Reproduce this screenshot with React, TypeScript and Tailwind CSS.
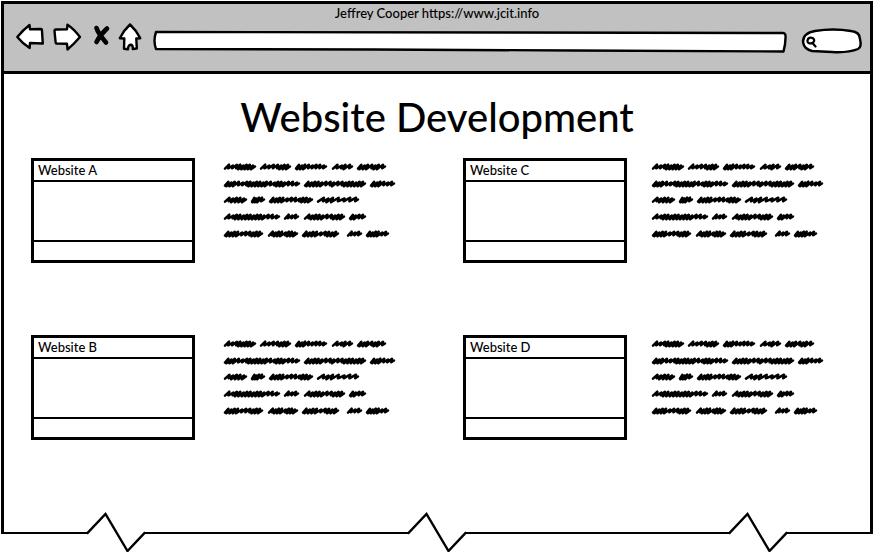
import React from "react";

type Word = [start: number, end: number, strokes: string];

// Scribbled placeholder copy: "n" is an open stroke, "u" a tight one.
const lines: Word[][] = [
  [[1, 33, "nnnuuuuu"], [37, 68, "nnnnuuu"], [72, 104, "uuunnnnn"], [109, 130, "nnun"], [134, 163, "uuunuun"]],
  [[1, 77, "uuunnnuuuuuunnuuunnn"], [81, 143, "uuuuunnunnuuuuuu"], [147, 172, "uuunnn"]],
  [[1, 24, "nuuuu"], [28, 42, "uuun"], [46, 90, "uuuunnnnuuu"], [94, 136, "nuunnnn"]],
  [[1, 57, "nnuuuuuuuuunnn"], [61, 76, "nnn"], [81, 122, "nuuuunnuuu"], [126, 143, "uunn"]],
  [[1, 40, "uuuunnnuuu"], [45, 75, "nuuunuuu"], [79, 116, "uuuunnuuu"], [124, 139, "nnn"], [143, 166, "uuuunn"]],
];
const baselines = [9, 26, 42, 59, 76];

function scribble([start, end, strokes]: Word, y: number) {
  const total = strokes.split("").reduce((sum, s) => sum + (s === "n" ? 5 : 4), 0);
  const scale = (end - start - 4) / total;
  let x = start + 1;
  let d = `M${x} ${y + 1.6}`;
  strokes.split("").forEach((s, i) => {
    const open = s === "n";
    const top = y - 2.3 + (i % 3 === 1 ? 0.8 : 0);
    const low = y + (open ? 1.3 : 2.3);
    x += (open ? 5 : 4) * scale;
    d += ` L${x.toFixed(1)} ${top.toFixed(1)} L${(x - (open ? 0.8 : 2)).toFixed(1)} ${low.toFixed(1)}`;
  });
  return `${d} L${end - 1} ${y - 0.5}`;
}

function PlaceholderText() {
  return (
    <svg className="h-[86px] w-[173px]" viewBox="0 0 173 86" fill="none" stroke="black" strokeWidth="2.5" strokeLinecap="round" strokeLinejoin="round" aria-hidden="true">
      {lines.map((words, i) => words.map((word) => <path key={`${i}-${word[0]}`} d={scribble(word, baselines[i])} />))}
    </svg>
  );
}

function IconButton({ label, width, children }: { label: string; width: number; children: React.ReactNode }) {
  return (
    <button type="button" aria-label={label} className="shrink-0">
      <svg width={width} height="28" viewBox={`0 0 ${width} 28`} className="overflow-visible" fill="white" stroke="black" strokeWidth="2.4" strokeLinecap="round" strokeLinejoin="round">
        {children}
      </svg>
    </button>
  );
}

function Outline({ viewBox, d }: { viewBox: string; d: string }) {
  return (
    <svg className="absolute inset-0 h-full w-full overflow-visible" viewBox={viewBox} preserveAspectRatio="none" fill="white" stroke="black" strokeWidth="2.4" strokeLinejoin="round" aria-hidden="true">
      <path d={d} vectorEffect="non-scaling-stroke" />
    </svg>
  );
}

function Site({ name }: { name: string }) {
  return (
    <article className="contents">
      <div className="w-[164px] border-3 border-black">
        <h2 className="h-[21px] border-b-2 border-black pl-1 text-[13px] leading-[18px]">{name}</h2>
        <div className="h-[58px]" />
        <div className="h-5 border-t-2 border-black" />
      </div>
      <PlaceholderText />
    </article>
  );
}

function Tear() {
  return (
    <svg className="h-10 w-[58px]" viewBox="0 0 58 40" fill="none" stroke="black" strokeWidth="2.4" aria-hidden="true">
      <path d="M0 21 H0.5 L18.5 2 L40.5 39 L57.5 21 H58" />
    </svg>
  );
}

export default function App() {
  return (
    <div className="bg-white px-px pt-px font-['Lato_Medium','Lato','Noto_Sans',sans-serif] font-medium text-black">
      <header className="border-3 border-black bg-[#c1c1c1] pb-4">
        <p className="text-center text-[13px] leading-[19px]">Jeffrey Cooper https://www.jcit.info</p>
        <div className="flex h-8 items-start pl-3 pr-2">
          <nav aria-label="Browser" className="flex gap-[9px]">
            <IconButton label="Back" width={28}>
              <path d="M1.3 14 Q7 7 13.5 2 L14 6.3 L25 6 Q26 6 26 8 L26.8 20.5 L14 20 L13.7 25 Q6 20 1.3 14 Z" />
            </IconButton>
            <IconButton label="Forward" width={28}>
              <path d="M1.5 8 Q1.5 6.5 3 6.5 L14 6.3 L14.5 1.7 Q21 6 27 14 Q21 21 14.5 26.5 L14 20.8 L3.5 20.5 Q2.5 20.5 2.5 18 Z" />
            </IconButton>
            <IconButton label="Stop" width={20}>
              <path d="M6.5 5 Q8 10 16 19.5 M17 5.5 Q10 12 6.5 19" fill="none" strokeWidth="4.6" />
            </IconButton>
            <IconButton label="Home" width={22}>
              <path d="M11 1.5 Q17 7 21.3 15.2 L17.3 15.5 L17.8 25.5 L13.8 26 Q14 22.5 12.5 21.8 Q9 21.5 9 26.3 L5 25.8 L5.3 15.5 L0.8 15.2 Q5 7 11 1.5 Z" />
            </IconButton>
          </nav>
          <label className="relative ml-3 mt-2 h-[21px] grow">
            <Outline viewBox="0 0 632 21" d="M3 1 L629 2 Q632 2 631.500 7 Q631.500 13 629.500 20.500 L420 19.5 L220 18.5 L3 18 Q0 10 3 1 Z" />
            <input type="url" aria-label="Address" className="relative block h-full w-full bg-transparent px-2 text-[13px] outline-none" />
          </label>
          <label className="relative ml-4 mt-[6px] h-6 w-[60px] shrink-0">
            <Outline viewBox="0 0 60 24" d="M1 13 Q1 4 13 2 Q31 -1 49 2 Q58 3 58 10 Q60 18 56 20 Q46 24 30 23 L10 22 Q2 20 1 13 Z" />
            <svg className="absolute left-1 top-[7px] h-3 w-3" viewBox="0 0 12 12" fill="none" stroke="black" strokeWidth="2.2" strokeLinecap="round" aria-hidden="true">
              <path d="M5.8 1.8 C1 .8 .2 7.2 3.5 7.3 C9 8 9.5 2.5 5.8 1.8 M6.5 7 L9.5 10.5" />
            </svg>
            <input type="search" aria-label="Search" className="relative block h-full w-full bg-transparent pl-5 pr-2 text-[13px] outline-none" />
          </label>
        </div>
      </header>
      <main className="border-x-3 border-black pb-[72px] pt-[19px]">
        <h1 className="text-center text-[40px] leading-[48px]">Website Development</h1>
        <div className="mt-[17px] grid grid-cols-[192fr_240fr_188fr_219fr] items-start gap-y-[72px] pl-[27px]">
          <Site name="Website A" />
          <Site name="Website C" />
          <Site name="Website B" />
          <Site name="Website D" />
        </div>
      </main>
      <footer className="grid grid-cols-[86fr_58px_263fr_58px_263fr_58px_86fr] items-start">
        <div className="h-[22px] border-b-2 border-l-3 border-black" />
        <Tear />
        <div className="h-[22px] border-b-2 border-black" />
        <Tear />
        <div className="h-[22px] border-b-2 border-black" />
        <Tear />
        <div className="h-[22px] border-b-2 border-r-3 border-black" />
      </footer>
    </div>
  );
}
